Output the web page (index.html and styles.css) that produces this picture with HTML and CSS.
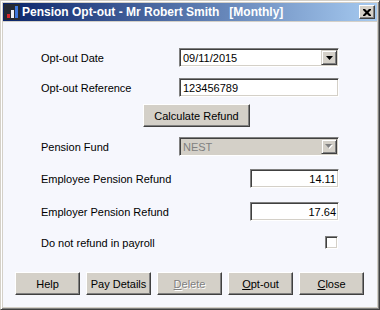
FILE: index.html
```html
<!DOCTYPE html>
<html lang="en">
<head>
    <meta charset="UTF-8">
    <title>Pension Opt-out</title>
    <link rel="stylesheet" href="styles.css">
</head>
<body>
    <div class="window">
        <div class="titlebar">
            <svg class="app-icon" width="16" height="16" viewBox="0 0 16 16">
                <rect width="16" height="16" rx="1" fill="#262a33"/>
                <rect x="3" y="10" width="3" height="4" fill="#d9262b"/>
                <rect x="7" y="6" width="3" height="8" fill="#eef0f4"/>
                <rect x="11" y="2" width="3" height="12" fill="#3f78dc"/>
            </svg>
            <span class="title">Pension Opt-out - Mr Robert Smith&nbsp;&nbsp;&nbsp;[Monthly]</span>
            <button class="close-btn">
                <svg width="8" height="7" viewBox="0 0 8 7">
                    <path d="M0 0h2l2 2 2-2h2v1L5.5 3.5 8 6v1H6L4 5 2 7H0V6l2.5-2.5L0 1z" fill="#000"/>
                </svg>
            </button>
        </div>

        <div class="client">
            <div class="form">
                <div class="row">
                    <span class="label">Opt-out Date</span>
                    <div class="field combo">
                        <span class="value">09/11/2015</span>
                        <span class="drop">
                            <svg width="7" height="4" viewBox="0 0 7 4"><path d="M0 0h7L3.5 4z" fill="#000"/></svg>
                        </span>
                    </div>
                </div>
                <div class="row">
                    <span class="label">Opt-out Reference</span>
                    <div class="field text">123456789</div>
                </div>
                <div class="row row-calc">
                    <button class="btn calc-btn">Calculate Refund</button>
                </div>
                <div class="row row-fund">
                    <span class="label">Pension Fund</span>
                    <div class="field combo disabled">
                        <span class="value">NEST</span>
                        <span class="drop">
                            <svg width="8" height="5" viewBox="0 0 8 5">
                                <path d="M1 1h7L4.5 5z" fill="#fff"/>
                                <path d="M0 0h7L3.5 4z" fill="#808080"/>
                            </svg>
                        </span>
                    </div>
                </div>
                <div class="row row-employee">
                    <span class="label">Employee Pension Refund</span>
                    <div class="field num">14.11</div>
                </div>
                <div class="row row-employer">
                    <span class="label">Employer Pension Refund</span>
                    <div class="field num">17.64</div>
                </div>
                <div class="row row-check">
                    <span class="label">Do not refund in payroll</span>
                    <span class="checkbox"></span>
                </div>
            </div>

            <div class="buttons">
                <button class="btn">Help</button>
                <button class="btn">Pay Details</button>
                <button class="btn" disabled><u>D</u>elete</button>
                <button class="btn"><u>O</u>pt-out</button>
                <button class="btn"><u>C</u>lose</button>
            </div>
        </div>
    </div>
</body>
</html>
```

FILE: styles.css
```css
* {
    margin: 0;
    padding: 0;
    box-sizing: border-box;
}
body {
    font-family: "Liberation Sans", Arial, sans-serif;
    font-size: 11px;
    color: #000;
    background: #d4d0c8;
}
.window {
    width: 380px;
    height: 310px;
    background: #d4d0c8;
    border: 1px solid;
    border-color: #d4d0c8 #404040 #404040 #d4d0c8;
    box-shadow: inset 1px 1px #fff, inset -1px -1px #808080;
    padding: 2px;
    display: flex;
    flex-direction: column;
}

/* caption */
.titlebar {
    height: 18px;
    background: linear-gradient(to right, #0a246a, #a6caf0);
    display: flex;
    align-items: center;
    padding: 0 2px 0 1px;
    color: #fff;
}
.app-icon {
    flex-shrink: 0;
}
.title {
    margin-left: 2px;
    font-weight: bold;
    font-size: 12px;
    white-space: nowrap;
}
.close-btn {
    margin-left: auto;
    width: 16px;
    height: 14px;
    background: #d4d0c8;
    border: 1px solid;
    border-color: #fff #404040 #404040 #fff;
    box-shadow: inset -1px -1px #808080;
    display: flex;
    align-items: center;
    justify-content: center;
}

/* client area */
.client {
    flex: 1;
    margin-top: 1px;
    background: #f6f7fd;
    padding-top: 26px;
    display: flex;
    flex-direction: column;
}
.form {
    padding-left: 38px;
}
.row {
    width: 298px;
    height: 19px;
    display: flex;
    align-items: center;
}
.row + .row {
    margin-top: 11px;
}
.row.row-calc {
    height: 23px;
    margin-top: 7px;
}
.row.row-fund {
    margin-top: 10px;
}
.row.row-employee {
    margin-top: 13px;
}
.row.row-employer {
    margin-top: 14px;
}
.row.row-check {
    margin-top: 12px;
}
.label {
    width: 138px;
    flex-shrink: 0;
}

/* sunken fields */
.field {
    height: 19px;
    background: #fff;
    border: 1px solid;
    border-color: #808080 #fff #fff #808080;
    box-shadow: inset 1px 1px #404040, inset -1px -1px #d4d0c8;
    padding: 0 3px;
    display: flex;
    align-items: center;
    white-space: nowrap;
}
.field.text {
    width: 160px;
}
.field.num {
    width: 89px;
    margin-left: auto;
    justify-content: flex-end;
    padding-right: 2px;
}
.combo {
    width: 160px;
    padding: 1px 1px 1px 3px;
}
.combo .drop {
    margin-left: auto;
    width: 16px;
    height: 15px;
    background: #d4d0c8;
    border: 1px solid;
    border-color: #d4d0c8 #404040 #404040 #d4d0c8;
    box-shadow: inset 1px 1px #fff, inset -1px -1px #808080;
    display: flex;
    align-items: center;
    justify-content: center;
}
.combo.disabled {
    background: #d4d0c8;
    color: #808080;
}
.checkbox {
    width: 13px;
    height: 13px;
    margin-left: auto;
    margin-right: 1px;
    background: #fff;
    border: 1px solid;
    border-color: #808080 #fff #fff #808080;
    box-shadow: inset 1px 1px #404040, inset -1px -1px #d4d0c8;
}

/* raised buttons */
.btn {
    height: 23px;
    width: 65px;
    font-family: inherit;
    font-size: 11px;
    color: #000;
    background: #d4d0c8;
    border: 1px solid;
    border-color: #fff #404040 #404040 #fff;
    box-shadow: inset -1px -1px #808080, inset 1px 1px #d4d0c8;
}
.btn:disabled {
    color: #808080;
    text-shadow: 1px 1px #fff;
}
.calc-btn {
    width: 107px;
    margin-left: 102px;
}
.buttons {
    display: flex;
    gap: 6px;
    padding-left: 12px;
    margin-top: 20px;
}
```
